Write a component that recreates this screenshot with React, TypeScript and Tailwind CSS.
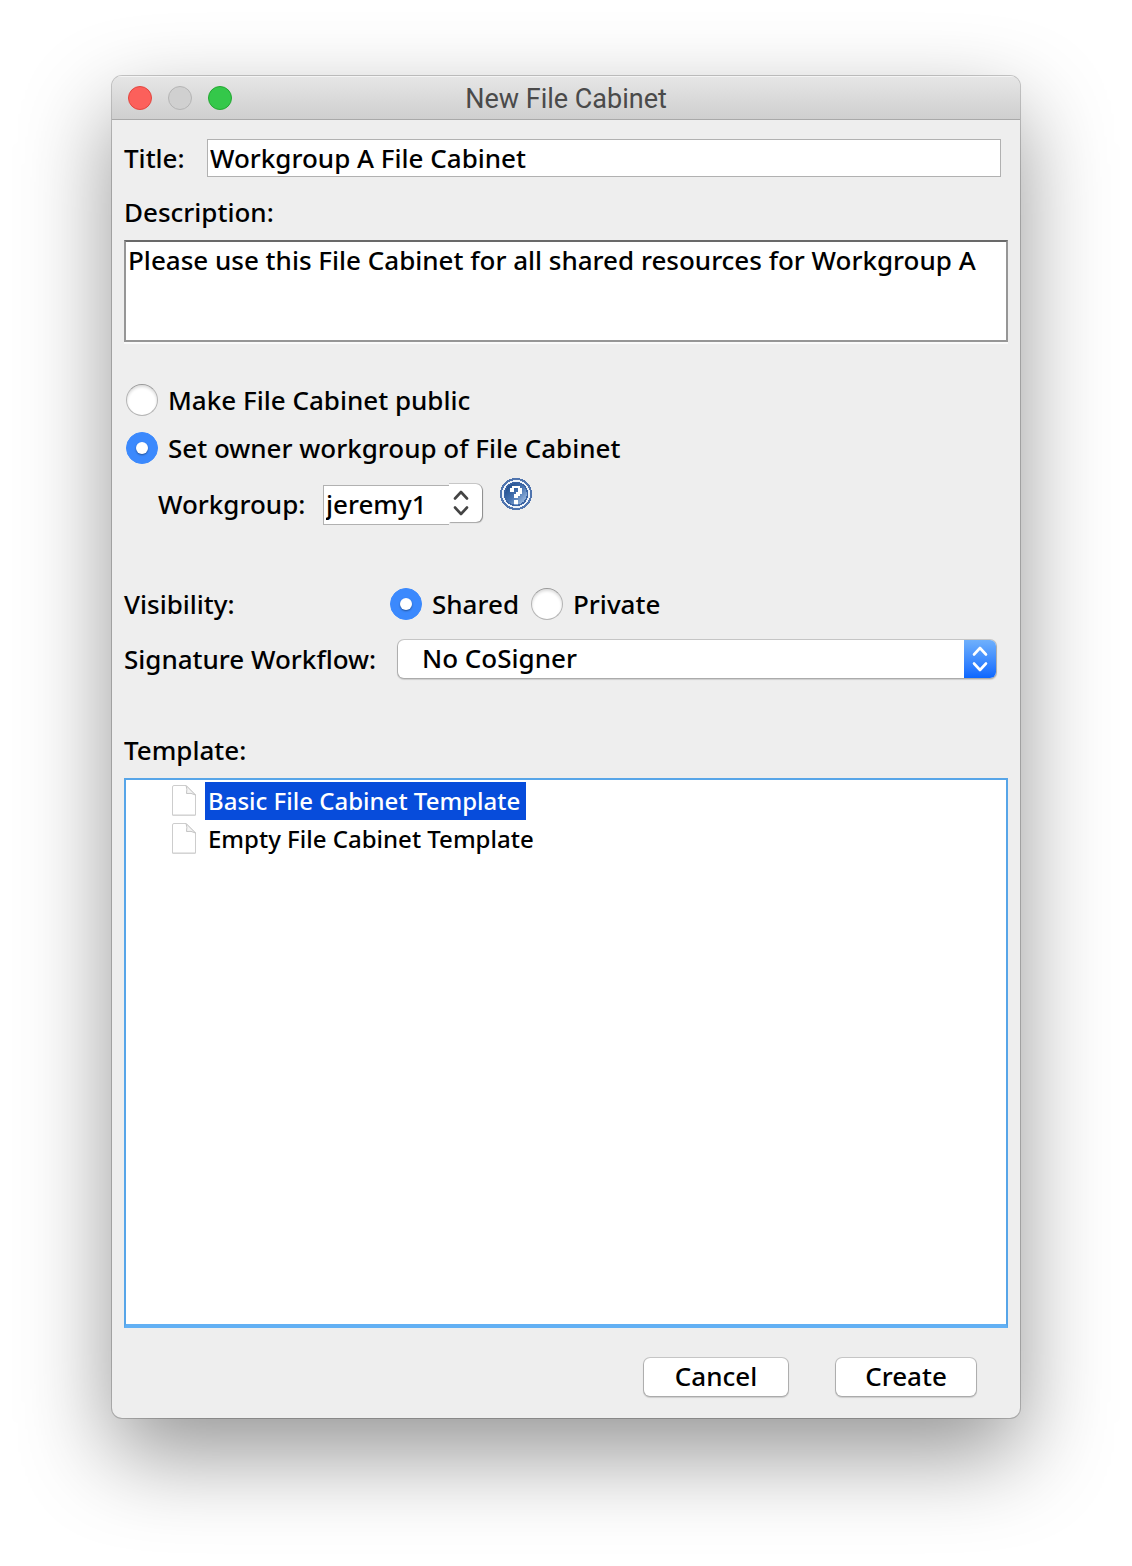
import React, { useState } from "react";
import clsx from "clsx";

const templates = ["Basic File Cabinet Template", "Empty File Cabinet Template"];

const raised =
  "rounded-md bg-white shadow-[0_0_0_1px_rgba(0,0,0,0.16),0_1px_1px_1px_rgba(0,0,0,0.14)]";

type RadioProps = {
  name: string;
  label: string;
  checked: boolean;
  onChange: () => void;
};

const Radio = ({ name, label, checked, onChange }: RadioProps) => (
  <label className="flex items-center gap-2.5">
    <span className="grid size-8 place-items-center">
      <input
        type="radio"
        name={name}
        checked={checked}
        onChange={onChange}
        className="col-start-1 row-start-1 size-8 appearance-none rounded-full border border-[#b5b5b5] border-t-[#999] bg-white shadow-[inset_0_2px_3px_rgba(0,0,0,0.14)] checked:border-[#3b89fd] checked:bg-[#3b89fd] checked:shadow-none"
      />
      {checked && (
        <span className="pointer-events-none col-start-1 row-start-1 size-3 rounded-full bg-white shadow-[0_1px_2px_rgba(0,0,0,0.4)]" />
      )}
    </span>
    {label}
  </label>
);

const Chevrons = ({ className }: { className: string }) => (
  <svg
    viewBox="0 0 16 26"
    className={className}
    fill="none"
    stroke="currentColor"
    strokeWidth="2.6"
    strokeLinecap="round"
    strokeLinejoin="round"
    aria-hidden="true"
  >
    <path d="M2 8.5 8 2 14 8.5M2 17.5 8 24 14 17.5" />
  </svg>
);

const HelpIcon = () => (
  <svg viewBox="0 0 32 32" className="size-8" shapeRendering="crispEdges" aria-hidden="true">
    <defs>
      <linearGradient id="help" x1="0" y1="0" x2="1" y2="1">
        <stop offset="0.15" stopColor="#24508f" />
        <stop offset="0.5" stopColor="#4673b1" />
        <stop offset="0.9" stopColor="#a5c1e4" />
      </linearGradient>
    </defs>
    <circle cx="16" cy="16" r="15" fill="#eef3fa" stroke="#4f74ae" strokeWidth="2" />
    <circle cx="16" cy="16" r="11.5" fill="url(#help)" stroke="#3a63a3" strokeWidth="1.5" />
    <path d="M12 8h8v2h2v6h-2v2h-2v2h-4v-4h2v-2h2v-4h-4v4h-4v-4h2z" fill="#fff" />
    <path d="M14 22h4v4h-4z" fill="#fff" />
  </svg>
);

const FileIcon = () => (
  <svg viewBox="0 0 26 32" className="h-8 w-[26px]" aria-hidden="true">
    <path d="M1.5 2.5q0-1.5 1.5-1.5h12L24.5 11v20h-23z" fill="#000" opacity="0.14" />
    <path
      d="M1.5 2q0-1.5 1.5-1.5h12L24.5 10v20h-23z"
      fill="#fff"
      stroke="#cdcdcd"
    />
    <path d="M15 .5q1.500 3.500.5 8 4.500-1 9 1.500z" fill="#f4f4f4" stroke="#c4c4c4" />
  </svg>
);

const App = () => {
  const [owner, setOwner] = useState("workgroup");
  const [visibility, setVisibility] = useState("shared");
  const [selected, setSelected] = useState(templates[0]);

  return (
    <div className="flex min-h-screen flex-col bg-white px-28 pt-[76px] pb-[148px] font-['Noto_Sans',sans-serif] text-[26px] leading-9 font-medium text-black">
      <div className="flex flex-1 flex-col overflow-hidden rounded-[10px] bg-[#eee] shadow-[0_0_0_1px_rgba(0,0,0,0.2),0_36px_90px_rgba(0,0,0,0.42)]">
        <header className="grid h-11 grid-cols-[1fr_auto_1fr] items-center border-b border-[#a9a9a9] bg-linear-to-b from-[#e6e6e6] to-[#cfcfcf] px-4 shadow-[inset_0_1px_0_#f4f4f4]">
          <div className="flex gap-4">
            <button aria-label="Close" className="size-6 rounded-full border border-[#e2463f] bg-[#fc605b]" />
            <button aria-label="Minimize" disabled className="size-6 rounded-full border border-[#b4b4b4] bg-[#d0d0d0]" />
            <button aria-label="Zoom" className="size-6 rounded-full border border-[#24a732] bg-[#34c84a]" />
          </div>
          <h1 className="pt-0.5 font-[Roboto,sans-serif] text-[27px] font-normal text-[#4a4a4a]">
            New File Cabinet
          </h1>
        </header>

        <form
          className="flex flex-1 flex-col px-3 pt-[19px] pb-[22px]"
          onSubmit={(e) => e.preventDefault()}
        >
          <div className="flex items-center pr-[7px]">
            <label htmlFor="title" className="w-[83px]">
              Title:
            </label>
            <input
              id="title"
              defaultValue="Workgroup A File Cabinet"
              className="h-[38px] min-w-0 flex-1 border border-[#b1b1b1] bg-white px-0.5 outline-none"
            />
          </div>

          <label htmlFor="description" className="mt-[17px]">
            Description:
          </label>
          <textarea
            id="description"
            defaultValue="Please use this File Cabinet for all shared resources for Workgroup A"
            className="mt-2.5 h-[102px] resize-none border-2 border-[#969696] border-t-[#696969] bg-white px-0.5 shadow-[0_2px_0_#fafafa] outline-none"
          />

          <div className="mt-[42px] flex flex-col gap-4 pl-0.5 leading-8">
            <Radio
              name="owner"
              label="Make File Cabinet public"
              checked={owner === "public"}
              onChange={() => setOwner("public")}
            />
            <Radio
              name="owner"
              label="Set owner workgroup of File Cabinet"
              checked={owner === "workgroup"}
              onChange={() => setOwner("workgroup")}
            />
          </div>

          <div className="mt-3.5 flex items-start pl-[34px]">
            <label htmlFor="workgroup" className="mt-2 w-[165px]">
              Workgroup:
            </label>
            <div className="flex items-start">
              <input
                id="workgroup"
                defaultValue="jeremy1"
                className="mt-[7px] h-10 w-[126px] border border-r-0 border-[#b1b1b1] bg-white px-0.5 pb-0.5 outline-none"
              />
              <button
                type="button"
                aria-label="Choose workgroup"
                className="mt-1.5 flex h-[38px] w-[33px] items-center justify-center rounded-r-md bg-white pr-2.5 text-[#444] shadow-[1px_0_0_rgba(0,0,0,0.16),0_-1px_0_rgba(0,0,0,0.16),1px_1px_1px_rgba(0,0,0,0.3)]"
              >
                <Chevrons className="h-[26px] w-4" />
              </button>
            </div>
            <button type="button" aria-label="Help" className="ml-[18px]">
              <HelpIcon />
            </button>
          </div>

          <div className="mt-[61px] flex items-center" role="radiogroup" aria-label="Visibility">
            <span className="w-[266px]">Visibility:</span>
            <div className="flex gap-3">
              <Radio
                name="visibility"
                label="Shared"
                checked={visibility === "shared"}
                onChange={() => setVisibility("shared")}
              />
              <Radio
                name="visibility"
                label="Private"
                checked={visibility === "private"}
                onChange={() => setVisibility("private")}
              />
            </div>
          </div>

          <div className="mt-[18px] flex items-center pr-3">
            <label htmlFor="workflow" className="w-[274px]">
              Signature Workflow:
            </label>
            <div className={clsx("grid h-[38px] flex-1 overflow-hidden", raised)}>
              <select
                id="workflow"
                className="col-start-1 row-start-1 w-full appearance-none pr-9 pb-0.5 pl-6 outline-none"
              >
                <option>No CoSigner</option>
              </select>
              <span className="pointer-events-none col-start-1 row-start-1 flex w-8 items-center justify-center justify-self-end bg-linear-to-b from-[#6fb0fc] to-[#0a66fe] text-white">
                <Chevrons className="h-[26px] w-4" />
              </span>
            </div>
          </div>

          <h2 id="template" className="mt-[54px]">
            Template:
          </h2>
          <ul
            aria-labelledby="template"
            className="mt-2.5 flex-1 border-2 border-b-4 border-[#57a5e8] border-b-[#62b0f4] bg-white py-0.5 pl-[45px] text-2xl"
          >
            {templates.map((template) => (
              <li key={template} className="flex items-center gap-2">
                <FileIcon />
                <button
                  type="button"
                  aria-pressed={selected === template}
                  onClick={() => setSelected(template)}
                  className={clsx(
                    "h-[38px] pr-1.5 pl-[3px]",
                    selected === template && "bg-[#074cdb] text-white"
                  )}
                >
                  {template}
                </button>
              </li>
            ))}
          </ul>

          <div className="mt-[30px] flex justify-end gap-12 pr-8">
            <button type="button" className={clsx("h-[38px] w-36 pb-0.5", raised)}>
              Cancel
            </button>
            <button type="submit" className={clsx("h-[38px] w-[140px] pb-0.5", raised)}>
              Create
            </button>
          </div>
        </form>
      </div>
    </div>
  );
};

export default App;
